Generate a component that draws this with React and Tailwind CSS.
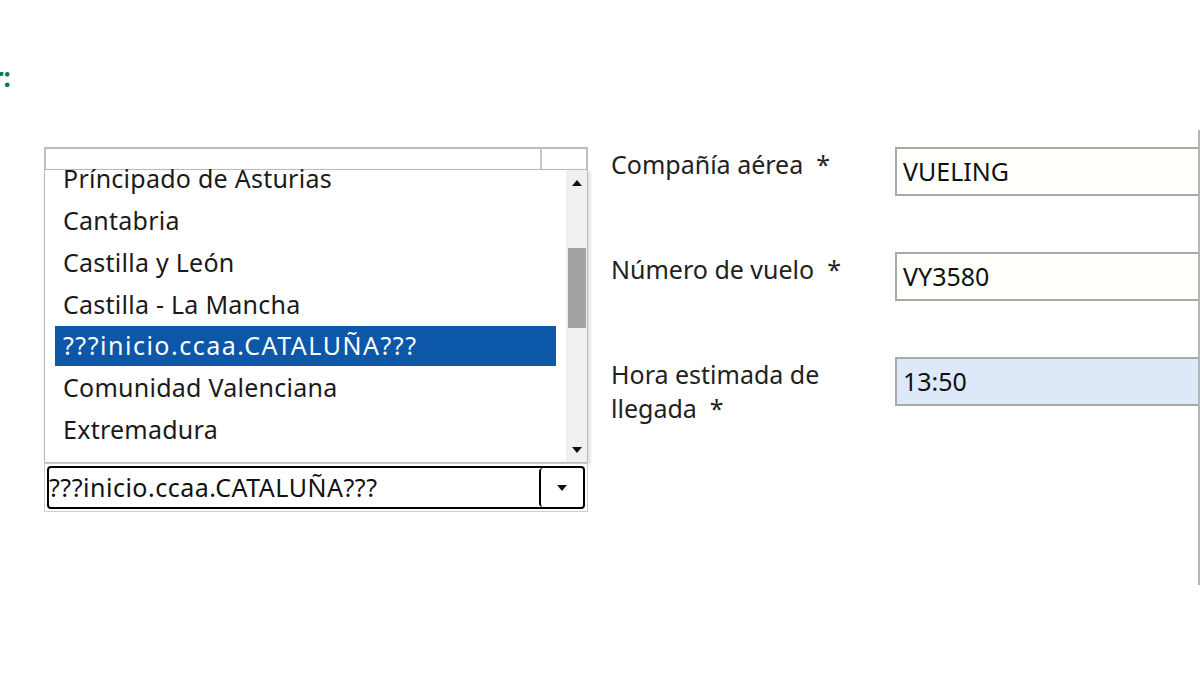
import React from 'react';

const regions = [
  'Príncipado de Asturias',
  'Cantabria',
  'Castilla y León',
  'Castilla - La Mancha',
  '???inicio.ccaa.CATALUÑA???',
  'Comunidad Valenciana',
  'Extremadura',
];
const SELECTED = 4;

const TriUp = () => (
  <svg width="10" height="6" viewBox="0 0 10 6"><path d="M0 6 L5 0 L10 6 Z" fill="#111" /></svg>
);
const TriDown = () => (
  <svg width="10" height="6" viewBox="0 0 10 6"><path d="M0 0 L5 6 L10 0 Z" fill="#111" /></svg>
);

const Field = ({ label, value, tint }) => (
  <div className="flex items-start">
    <div className="w-[284px] pt-0 text-[25px] leading-[34px] text-[#222] whitespace-pre">{label}</div>
    <div className={`flex-1 h-[49px] border-2 border-r-0 border-[#a9a9a9] ${tint ? 'bg-[#dde9f8]' : 'bg-[#fffffc]'} pl-[6px] flex items-center text-[25px] text-[#111]`}>
      {value}
    </div>
  </div>
);

export default function App() {
  return (
    <div className="w-[1200px] h-[675px] bg-white overflow-hidden relative" style={{ fontFamily: '"Noto Sans", "Open Sans", sans-serif' }}>
      {/* cut-off green heading mark */}
      <div className="absolute left-[-8px] top-[64px] text-[26px] font-bold text-[#0a7a3a] leading-none">r:</div>

      {/* cut-off labels at the left edge */}
      <div className="absolute left-[-14px] top-[460px] text-[25px] leading-[36px] text-[#222]">
        <div>d</div>
        <div>n</div>
      </div>

      <div className="flex pt-[147px] pl-[44px]">
        {/* Region select column */}
        <div className="w-[544px] relative">
          {/* underlying select outline */}
          <div className="h-[22px] border-2 border-b-0 border-[#bdbdbd] flex">
            <div className="flex-1" />
            <div className="w-[46px] border-l-2 border-[#c8c8c8]" />
          </div>
          {/* open list */}
          <div className="h-[294px] border border-[#bbb] bg-white flex shadow-[2px_2px_4px_rgba(0,0,0,0.15)]">
            <div className="flex-1 pl-[10px] pr-[10px]">
              <div className="-mt-[12px]">
                {regions.map((r, i) => (
                  <div
                    key={r}
                    className={`flex items-center pl-[8px] text-[25px] ${i === SELECTED ? 'bg-[#0d57a8] text-white h-[40px] mb-[1px] tracking-[0.06em]' : 'h-[42px] text-[#1a1a1a] tracking-[0.01em]'}`}
                  >
                    {r}
                  </div>
                ))}
              </div>
            </div>
            <div className="w-[21px] bg-[#f0f0f0] flex flex-col items-center">
              <div className="h-[26px] flex items-center"><TriUp /></div>
              <div className="h-[52px]" />
              <div className="w-[18px] h-[80px] bg-[#a3a3a3]" />
              <div className="flex-1" />
              <div className="h-[24px] flex items-center"><TriDown /></div>
            </div>
          </div>
          {/* selected value */}
          <div className="h-[49px] border border-[#ccc] p-[2px] bg-white">
            <div className="h-full flex border-2 border-black rounded-[4px]">
              <div className="flex-1 flex items-center text-[25px] text-[#111] tracking-[0.02em]">???inicio.ccaa.CATALUÑA???</div>
              <div className="w-[44px] border-l-2 border-black rounded-[4px] flex items-center justify-center"><TriDown /></div>
            </div>
          </div>
        </div>

        {/* Flight info column */}
        <div className="flex-1 pl-[23px] flex flex-col gap-[56px] border-r-2 border-[#b5b5b5] h-[455px] -mt-[17px] pt-[17px]">
          <Field label={'Compañía aérea  *'} value="VUELING" />
          <Field label={'Número de vuelo  *'} value="VY3580" />
          <Field label={'Hora estimada de\nllegada  *'} value="13:50" tint />
        </div>
      </div>
    </div>
  );
}
